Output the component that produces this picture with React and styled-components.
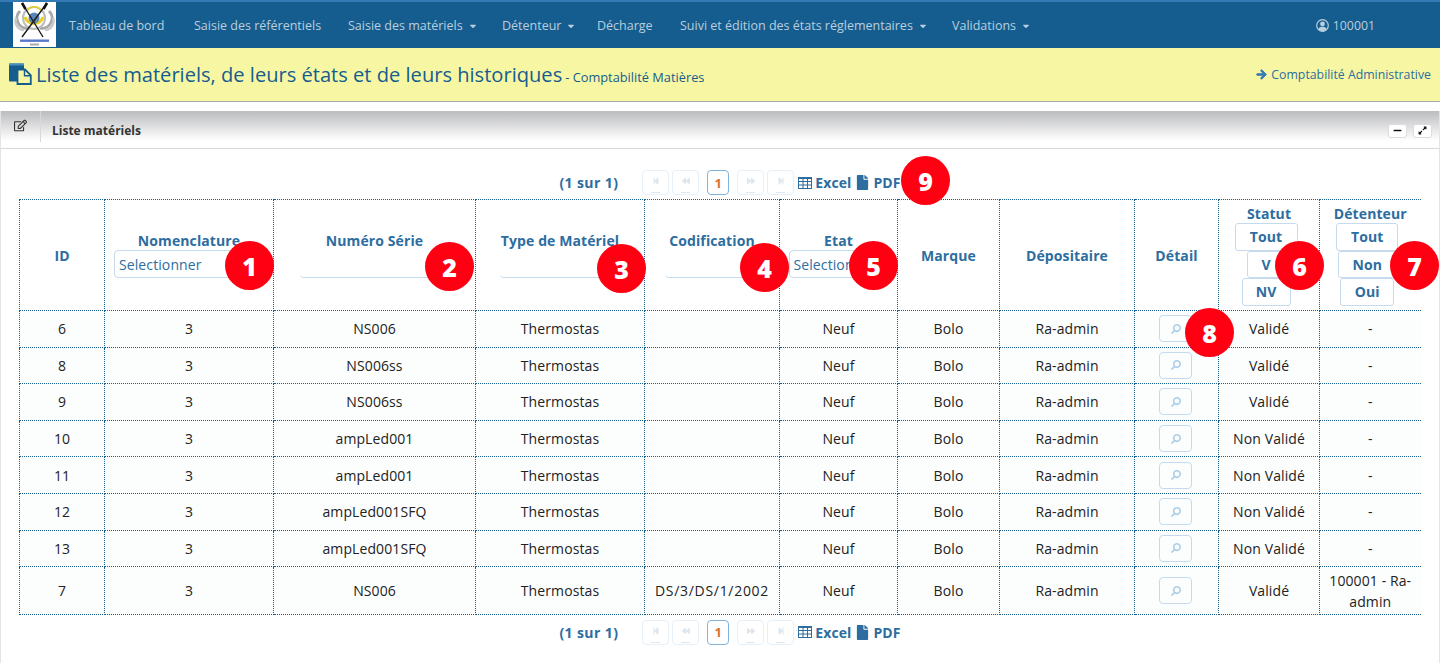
import React from "react";
import styled, { createGlobalStyle } from "styled-components";
import { FaCaretDown, FaArrowRight, FaFile, FaRegEdit, FaMinus, FaExpandAlt, FaSearch, FaStepBackward, FaBackward, FaForward, FaStepForward } from "react-icons/fa";

const GlobalStyle = createGlobalStyle`
  html, body { margin: 0; padding: 0; background: #fff; height: 663px; overflow: hidden; }
  body { font-family: "Open Sans", "Liberation Sans", sans-serif; font-size: 14px; color: #222; }
  * { box-sizing: border-box; }
`;

const NAV_ITEMS = [
  { label: "Tableau de bord", w: 98 },
  { label: "Saisie des référentiels", w: 127 },
  { label: "Saisie des matériels", w: 127, caret: true },
  { label: "Détenteur", w: 68, caret: true },
  { label: "Décharge", w: 56 },
  { label: "Suivi et édition des états réglementaires", w: 245, caret: true },
  { label: "Validations", w: 75, caret: true },
];

const COL_WIDTHS = [85, 169, 202, 169, 135, 118, 102, 135, 84, 101, 101];

const ROWS = [
  ["6", "3", "NS006", "Thermostas", "", "Neuf", "Bolo", "Ra-admin", "Validé", "-"],
  ["8", "3", "NS006ss", "Thermostas", "", "Neuf", "Bolo", "Ra-admin", "Validé", "-"],
  ["9", "3", "NS006ss", "Thermostas", "", "Neuf", "Bolo", "Ra-admin", "Validé", "-"],
  ["10", "3", "ampLed001", "Thermostas", "", "Neuf", "Bolo", "Ra-admin", "Non Validé", "-"],
  ["11", "3", "ampLed001", "Thermostas", "", "Neuf", "Bolo", "Ra-admin", "Non Validé", "-"],
  ["12", "3", "ampLed001SFQ", "Thermostas", "", "Neuf", "Bolo", "Ra-admin", "Non Validé", "-"],
  ["13", "3", "ampLed001SFQ", "Thermostas", "", "Neuf", "Bolo", "Ra-admin", "Non Validé", "-"],
  ["7", "3", "NS006", "Thermostas", "DS/3/DS/1/2002", "Neuf", "Bolo", "Ra-admin", "Validé", "100001 - Ra-admin"],
];

// numbered callouts laid over the screenshot
const MARKERS = [
  { n: 1, x: 225, y: 241 },
  { n: 2, x: 425, y: 242 },
  { n: 3, x: 597, y: 244 },
  { n: 4, x: 740, y: 243 },
  { n: 5, x: 849, y: 241 },
  { n: 6, x: 1275, y: 241 },
  { n: 7, x: 1390, y: 241 },
  { n: 8, x: 1185, y: 308 },
  { n: 9, x: 901, y: 156 },
];

function TableIcon() {
  return (
    <svg width="14" height="12" viewBox="0 0 14 12" fill="none" stroke="currentColor">
      <rect x="0.5" y="0.5" width="13" height="11" />
      <path d="M0 1.5H14M0 4.5H14M0 8H14M5 2V12M9.5 2V12" />
    </svg>
  );
}

function UserIcon() {
  return (
    <svg width="13" height="13" viewBox="0 0 13 13">
      <circle cx="6.5" cy="6.5" r="5.8" fill="none" stroke="currentColor" strokeWidth="1.2" />
      <circle cx="6.5" cy="4.9" r="2.4" fill="currentColor" />
      <path d="M2.3 10.3C3 8.4 4.5 7.8 6.5 7.8S10 8.4 10.7 10.3A5.6 5.6 0 0 1 2.3 10.3Z" fill="currentColor" />
    </svg>
  );
}

function DocsIcon() {
  return (
    <svg width="23" height="22" viewBox="0 0 23 22">
      <rect x="0" y="0.5" width="15" height="18" rx="1" fill="#155d8e" />
      <rect x="0" y="0.5" width="15" height="2" fill="#4a8fc0" />
      <path d="M8.5 6.5H16L21.8 12.3V21H8.5Z" fill="#f7f7a3" stroke="#155d8e" strokeWidth="1.8" />
      <path d="M15.5 6.5V12.8H21.8" fill="none" stroke="#155d8e" strokeWidth="1.4" />
    </svg>
  );
}

function Paginator({ $bottom }) {
  return (
    <Pager $bottom={$bottom}>
      <PageInfo>(1 sur 1)</PageInfo>
      <PageGroup>
        <PageBtn><FaStepBackward /></PageBtn>
        <PageBtn><FaBackward /></PageBtn>
      </PageGroup>
      <CurrentPage>1</CurrentPage>
      <PageGroup>
        <PageBtn><FaForward /></PageBtn>
        <PageBtn><FaStepForward /></PageBtn>
      </PageGroup>
      <ExportLink><TableIcon /> Excel</ExportLink>
      <ExportLink><FaFile /> PDF</ExportLink>
    </Pager>
  );
}

function Logo() {
  return (
    <LogoBox>
      <svg width="43" height="45" viewBox="0 0 43 45">
        <path d="M7 9a10 10 0 0 0 9 17M36 9a10 10 0 0 1-9 17" fill="none" stroke="#a9a9a9" strokeWidth="3" />
        <path d="M3 16a9 9 0 0 0 8 12M40 16a9 9 0 0 1-8 12" fill="none" stroke="#c9c9c9" strokeWidth="2.5" />
        <circle cx="21" cy="16" r="11" fill="none" stroke="#bdbdbd" strokeWidth="2" />
        <path d="M12 15a9.5 9.5 0 0 0 18 0" fill="none" stroke="#e8d020" strokeWidth="3" />
        <path d="M14 9a8 8 0 0 1 14 0" fill="none" stroke="#e8d020" strokeWidth="1.5" />
        <circle cx="21" cy="16" r="5.5" fill="#5b85b8" />
        <path d="M9 1L30 35M34 1L9 35" stroke="#1c1c1c" strokeWidth="1.4" />
        <path d="M9 1L12.5 7M34 1L30.5 7" stroke="#111" strokeWidth="2.6" />
        <rect x="7" y="37.5" width="29" height="2.4" fill="#5a78c8" />
        <rect x="17" y="41.5" width="9" height="2" fill="#aaa" />
      </svg>
    </LogoBox>
  );
}

export default function App() {
  return (
    <Page>
      <GlobalStyle />
      <Nav>
        <Logo />
        <NavList>
          {NAV_ITEMS.map((item) => (
            <NavItem key={item.label} $w={item.w}>
              {item.label}
              {item.caret && <FaCaretDown />}
            </NavItem>
          ))}
        </NavList>
        <UserBox><UserIcon /> 100001</UserBox>
      </Nav>
      <TitleBar>
        <TitleLeft>
          <TitleIcon><DocsIcon /></TitleIcon>
          <Title>Liste des matériels, de leurs états et de leurs historiques</Title>
          <SubTitle>- Comptabilité Matières</SubTitle>
        </TitleLeft>
        <SideLink><FaArrowRight /> Comptabilité Administrative</SideLink>
      </TitleBar>
      <Panel>
        <PanelHead>
          <PanelIcon><FaRegEdit /></PanelIcon>
          <PanelTitle>Liste matériels</PanelTitle>
          <PanelTools>
            <ToolBtn><FaMinus /></ToolBtn>
            <ToolBtn><FaExpandAlt /></ToolBtn>
          </PanelTools>
        </PanelHead>
        <PanelBody>
          <Paginator />
          <Table>
            <colgroup>
              {COL_WIDTHS.map((w, i) => <col key={i} style={{ width: w }} />)}
            </colgroup>
            <thead>
              <tr>
                <Th>ID</Th>
                <Th><HeadLabel>Nomenclature</HeadLabel><SelectBox $w={150}>Selectionner</SelectBox></Th>
                <Th><HeadLabel>Numéro Série</HeadLabel><TextFilter $w={150} /></Th>
                <Th><HeadLabel>Type de Matériel</HeadLabel><TextFilter $w={120} /></Th>
                <Th><HeadLabel>Codification</HeadLabel><TextFilter $w={94} /></Th>
                <Th><HeadLabel>Etat</HeadLabel><SelectBox $w={100}>Selectionner</SelectBox></Th>
                <Th>Marque</Th>
                <Th>Dépositaire</Th>
                <Th>Détail</Th>
                <Th>
                  <HeadLabel $tight>Statut</HeadLabel>
                  <ToggleStack><ToggleBtn $w={63}>Tout</ToggleBtn><ToggleBtn $w={39}>V</ToggleBtn><ToggleBtn $w={49}>NV</ToggleBtn></ToggleStack>
                </Th>
                <Th>
                  <HeadLabel $tight>Détenteur</HeadLabel>
                  <ToggleStack><ToggleBtn $w={62}>Tout</ToggleBtn><ToggleBtn $w={58}>Non</ToggleBtn><ToggleBtn $w={54}>Oui</ToggleBtn></ToggleStack>
                </Th>
              </tr>
            </thead>
            <tbody>
              {ROWS.map((r) => (
                <Row key={r[0]} $tall={r[0] === "7"}>
                  {r.slice(0, 4).map((v, i) => <Td key={i}>{v}</Td>)}
                  <Td><CodeText>{r[4]}</CodeText></Td>
                  {r.slice(5, 8).map((v, i) => <Td key={i}>{v}</Td>)}
                  <Td><DetailBtn><FaSearch /></DetailBtn></Td>
                  <Td>{r[8]}</Td>
                  <Td>{r[9]}</Td>
                </Row>
              ))}
            </tbody>
          </Table>
          <Paginator $bottom />
        </PanelBody>
      </Panel>
      {MARKERS.map((m) => (
        <Marker key={m.n} style={{ left: m.x, top: m.y }}>{m.n}</Marker>
      ))}
    </Page>
  );
}

const Page = styled.div`
  position: relative;
  width: 1440px;
  height: 663px;
  overflow: hidden;
`;

const Nav = styled.nav`
  height: 48px;
  background: #155d8e;
  border-top: 2px solid #337ab7;
  display: flex;
  align-items: flex-start;
  padding-left: 13px;
`;

const LogoBox = styled.div`
  width: 43px;
  height: 45px;
  background: #fff;
  svg { display: block; }
`;

const NavList = styled.div`
  display: flex;
  flex: 0 0 auto;
  gap: 27px;
  margin-left: 13px;
  height: 46px;
  align-items: center;
`;

const NavItem = styled.span`
  flex: 0 0 ${(p) => p.$w}px;
  min-width: 0;
  color: #b9cfdf;
  font-size: 12.5px;
  white-space: nowrap;
  display: flex;
  align-items: center;
  svg { font-size: 10px; margin-left: 5px; margin-top: 2px; flex: none; }
`;

const UserBox = styled.div`
  margin-left: auto;
  margin-right: 65px;
  height: 46px;
  display: flex;
  align-items: center;
  gap: 4px;
  color: #b9cfdf;
  font-size: 12.3px;
`;

const TitleBar = styled.div`
  height: 54px;
  background: #f7f7a3;
  border-bottom: 1px solid #a8a8a8;
  display: flex;
  align-items: center;
  justify-content: space-between;
  padding: 0 9px;
`;

const TitleLeft = styled.div`
  display: flex;
  align-items: center;
`;

const TitleIcon = styled.span`
  display: flex;
  margin-right: 4px;
  margin-top: -1px;
`;

const Title = styled.span`
  color: #155d8e;
  font-size: 20.1px;
`;

const SubTitle = styled.span`
  color: #155d8e;
  font-size: 12.8px;
  margin-left: 3px;
  margin-top: 5px;
`;

const SideLink = styled.span`
  color: #2d6d9f;
  font-size: 12.3px;
  svg {
    color: #337ab7;
    font-size: 11px;
    vertical-align: -1px;
    margin-right: 1px;
    stroke: currentColor;
    stroke-width: 40;
  }
`;

const Panel = styled.section`
  margin-top: 9px;
  border-left: 1px solid #e4e4e4;
  border-right: 1px solid #e4e4e4;
  height: 552px;
`;

const PanelHead = styled.div`
  height: 38px;
  background: linear-gradient(#bbbcbe, #ffffff 80%);
  border-bottom: 1px solid #d8d8d8;
  display: flex;
  align-items: center;
`;

const PanelIcon = styled.span`
  width: 40px;
  height: 31px;
  border-right: 1px solid #d8d8d8;
  display: flex;
  align-items: center;
  justify-content: center;
  color: #333;
  font-size: 13px;
  align-self: flex-start;
  padding-bottom: 2px;
`;

const PanelTitle = styled.span`
  font-size: 12px;
  font-weight: 700;
  color: #333;
  margin-left: 11px;
  margin-top: 2px;
`;

const PanelTools = styled.div`
  margin-left: auto;
  margin-right: 7px;
  margin-top: 2px;
  display: flex;
  gap: 6px;
`;

const ToolBtn = styled.span`
  width: 19px;
  height: 14px;
  background: #fff;
  border: 1px solid #ddd;
  border-radius: 3px;
  display: flex;
  align-items: center;
  justify-content: center;
  font-size: 9px;
  color: #111;
`;

const PanelBody = styled.div`
  padding: 20px 18px 0;
`;

const Pager = styled.div`
  height: 30px;
  display: flex;
  align-items: center;
  justify-content: center;
  gap: 4px;
  padding-left: 20px;
  padding-bottom: ${(p) => (p.$bottom ? "0" : "3px")};
  padding-top: ${(p) => (p.$bottom ? "4px" : "0")};
`;

const PageInfo = styled.span`
  color: #2d6d9f;
  font-weight: 700;
  font-size: 14px;
  letter-spacing: 0.4px;
  margin-right: 20px;
`;

const PageGroup = styled.span`
  display: flex;
  gap: 3px;
`;

const PageBtn = styled.span`
  position: relative;
  width: 27px;
  height: 25px;
  border: 1px solid #e6f0f8;
  border-radius: 4px;
  display: flex;
  align-items: center;
  justify-content: center;
  color: #dde6ee;
  font-size: 8px;
  padding-bottom: 3px;
  &::after {
    content: "";
    position: absolute;
    left: 8px;
    right: 8px;
    bottom: 1px;
    height: 1px;
    background: #dde6ee;
  }
`;

const CurrentPage = styled.span`
  width: 22px;
  height: 25px;
  border: 1px solid #7fb4df;
  border-radius: 4px;
  margin: 0 4px;
  display: flex;
  align-items: center;
  justify-content: center;
  color: #d9752b;
  font-weight: 700;
  font-size: 13px;
`;

const ExportLink = styled.span`
  color: #2d6d9f;
  font-weight: 700;
  font-size: 14px;
  letter-spacing: 0.1px;
  display: flex;
  align-items: center;
  gap: 3px;
  svg { font-size: 15px; }
`;

const Table = styled.table`
  width: 1401px;
  table-layout: fixed;
  border-collapse: collapse;
`;

const Th = styled.th`
  border: 1px dotted #155d8e;
  height: 111px;
  padding: 0;
  color: #2d6d9f;
  font-size: 14px;
  font-weight: 700;
  letter-spacing: 0.1px;
  text-align: center;
  vertical-align: middle;
  &:last-child { border-right: none; }
`;

const HeadLabel = styled.div`
  line-height: ${(p) => (p.$tight ? "19px" : "18px")};
`;

const SelectBox = styled.div`
  width: ${(p) => p.$w}px;
  height: 28px;
  margin: 0 auto;
  border: 1px solid #c5dbed;
  border-radius: 4px;
  text-align: left;
  padding-left: 4px;
  font-weight: 400;
  line-height: 27px;
  overflow: hidden;
  white-space: nowrap;
`;

const TextFilter = styled.div`
  width: ${(p) => p.$w}px;
  height: 28px;
  margin: 0 auto;
  border-bottom: 1px solid #c5dbed;
  border-radius: 4px;
`;

const ToggleStack = styled.div`
  display: flex;
  flex-direction: column;
  align-items: center;
  padding-right: 6px;
`;

const ToggleBtn = styled.div`
  width: ${(p) => p.$w}px;
  height: 27.5px;
  border: 1px solid #c5dbed;
  border-radius: 3px;
  line-height: 25px;
`;

const Row = styled.tr`
  background: #fcfefe;
  height: ${(p) => (p.$tall ? "48px" : "36.6px")};
`;

const Td = styled.td`
  border: 1px dotted #155d8e;
  padding: 0 2px;
  text-align: center;
  font-size: 14px;
  letter-spacing: 0.1px;
  color: #222;
  line-height: 21px;
  &:last-child { border-right: none; }
`;

const CodeText = styled.span`
  letter-spacing: 0.7px;
  white-space: nowrap;
`;

const DetailBtn = styled.span`
  display: inline-flex;
  width: 33px;
  height: 27px;
  margin-left: -2px;
  border: 1px solid #c5dbed;
  border-radius: 4px;
  align-items: center;
  justify-content: center;
  color: #a9cde8;
  font-size: 10px;
  vertical-align: middle;
  svg { transform: scaleX(-1); }
`;

const Marker = styled.span`
  position: absolute;
  width: 49px;
  height: 49px;
  border-radius: 50%;
  background: #ff0013;
  color: #fff;
  font-weight: 800;
  font-size: 25px;
  display: flex;
  align-items: center;
  justify-content: center;
`;
